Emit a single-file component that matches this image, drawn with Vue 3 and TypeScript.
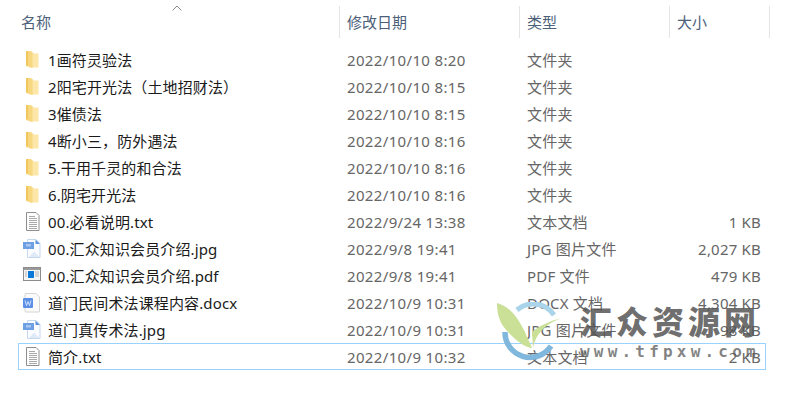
<script setup lang="ts">
// 文件列表 — 资源管理器详细信息视图
type Kind = 'folder' | 'txt' | 'jpg' | 'pdf' | 'docx'

interface Row {
  name: string
  date: string
  type: string
  size: string
  kind: Kind
  selected?: boolean
}

const columns = [
  { label: '名称', cls: 'col-name' },
  { label: '修改日期', cls: 'col-date' },
  { label: '类型', cls: 'col-type' },
  { label: '大小', cls: 'col-size' },
]

const rows: Row[] = [
  { name: '1画符灵验法', date: '2022/10/10 8:20', type: '文件夹', size: '', kind: 'folder' },
  { name: '2阳宅开光法（土地招财法）', date: '2022/10/10 8:15', type: '文件夹', size: '', kind: 'folder' },
  { name: '3催债法', date: '2022/10/10 8:15', type: '文件夹', size: '', kind: 'folder' },
  { name: '4断小三，防外遇法', date: '2022/10/10 8:16', type: '文件夹', size: '', kind: 'folder' },
  { name: '5.干用千灵的和合法', date: '2022/10/10 8:16', type: '文件夹', size: '', kind: 'folder' },
  { name: '6.阴宅开光法', date: '2022/10/10 8:16', type: '文件夹', size: '', kind: 'folder' },
  { name: '00.必看说明.txt', date: '2022/9/24 13:38', type: '文本文档', size: '1 KB', kind: 'txt' },
  { name: '00.汇众知识会员介绍.jpg', date: '2022/9/8 19:41', type: 'JPG 图片文件', size: '2,027 KB', kind: 'jpg' },
  { name: '00.汇众知识会员介绍.pdf', date: '2022/9/8 19:41', type: 'PDF 文件', size: '479 KB', kind: 'pdf' },
  { name: '道门民间术法课程内容.docx', date: '2022/10/9 10:31', type: 'DOCX 文档', size: '4,304 KB', kind: 'docx' },
  { name: '道门真传术法.jpg', date: '2022/10/9 10:31', type: 'JPG 图片文件', size: '98 KB', kind: 'jpg' },
  { name: '简介.txt', date: '2022/10/9 10:32', type: '文本文档', size: '2 KB', kind: 'txt', selected: true },
]
</script>

<template>
  <div class="explorer">
    <div class="sort-row">
      <svg class="sort-arrow" width="10" height="6" viewBox="0 0 10 6" fill="none" stroke="#8a8a8a" stroke-width="1">
        <polyline points="0.5 5.5 5 1 9.5 5.5" />
      </svg>
    </div>
    <div class="head">
      <div v-for="c in columns" :key="c.label" class="head-cell" :class="c.cls">{{ c.label }}</div>
    </div>
    <div class="list">
      <div v-for="r in rows" :key="r.name" class="row" :class="{ selected: r.selected }">
        <div class="cell-name">
          <svg class="icon" width="20" height="20" viewBox="0 0 20 20">
            <template v-if="r.kind === 'folder'">
              <path d="M3 1h5l3 2.500h4.500v14h-9z" fill="#fce7a8" />
              <path d="M3 1h4.500l2 1.500v15.500l-6.500-2z" fill="#f7d77f" />
              <path d="M3 1h2v14.500l-2-.5z" fill="#f1c65c" />
            </template>
            <template v-else-if="r.kind === 'txt'">
              <path d="M3.500 .5h9.500l3 3v15h-12.500z" fill="#fdfdfd" stroke="#8e8e8e" />
              <path d="M6 4.500h6M6 6.500h8M6 8.500h8M6 10.500h8M6 12.500h8M6 14.500h8M6 16.500h8" stroke="#a8a8a8" />
            </template>
            <template v-else-if="r.kind === 'jpg'">
              <path d="M4.500 .5h8.500l4 4v14h-12.500z" fill="#fafcff" stroke="#c4d8f0" />
              <path d="M12.500 .5l4.500 4.500h-4.500z" fill="#5f93dd" />
              <path d="M6 18l5-5.500 5.500 5.500z" fill="#dfeaf8" />
              <rect x="0" y="3" width="11" height="7" fill="#6c9fe4" />
              <rect x="3" y="5" width="5" height="2.500" fill="#a9c7ee" />
            </template>
            <template v-else-if="r.kind === 'pdf'">
              <rect x="0.500" y="1.500" width="17" height="13" fill="#f6f6f6" stroke="#8c8c8c" />
              <rect x="1" y="2" width="16" height="2" fill="#9a9a9a" />
              <rect x="5" y="5" width="6" height="7" fill="#0a78d7" />
              <path d="M12 6h4M12 8h4M12 10h4M2 6h2M2 8h2M2 10h2" stroke="#b4b4b4" />
            </template>
            <template v-else>
              <path d="M2.500 .5h10.500l3.500 3.500v14a1 1 0 0 1-1 1h-12.500a1 1 0 0 1-1-1v-16.500a1 1 0 0 1 1-1z" fill="#fafafa" stroke="#d4d4d4" />
              <rect x="0" y="5" width="10" height="10" rx="1" fill="#5b90e6" />
              <path d="M2 7.500l1.500 5 1.500-4 1.500 4 1.500-5" fill="none" stroke="#cfe0fa" />
            </template>
          </svg>
          <span class="name">{{ r.name }}</span>
        </div>
        <div class="cell-date">{{ r.date }}</div>
        <div class="cell-type">{{ r.type }}</div>
        <div class="cell-size">{{ r.size }}</div>
      </div>
    </div>

    <!-- 水印 -->
    <div class="watermark">
      <svg class="wm-logo" width="70" height="60" viewBox="0 0 70 60">
        <path d="M20 8 A 25 25 0 0 1 57 13" fill="none" stroke="#a9d4ea" stroke-width="5" />
        <path d="M8 30 A 25 25 0 0 0 54 44" fill="none" stroke="#80b8dd" stroke-width="5.500" />
        <path d="M0 1 C 10 4 18 10 28 30 C 30 36 33 40 35 46 C 25 45 13 33 6 24 C 1 16 0 8 0 1z" fill="#c9e096" />
        <path d="M36 46 C 38 38 42 24 65 16 C 52 19 42 24 35 30z" fill="#c9e096" />
      </svg>
      <div class="wm-text">
        <div class="wm-cn">汇众资源网</div>
        <div class="wm-url">www.tfpxw.com</div>
      </div>
    </div>
  </div>
</template>

<style scoped>
.explorer {
  position: relative;
  width: 805px;
  height: 403px;
  overflow: hidden;
  background: #ffffff;
  font-family: "Noto Sans", "Noto Sans CJK SC", sans-serif;
  font-size: 15px;
  color: #1f1f1f;
}

.sort-row {
  height: 6px;
  position: relative;
}

.sort-arrow {
  position: absolute;
  left: 172px;
  top: 5px;
}

/* 表头 */
.head {
  display: grid;
  grid-template-columns: 340px 180px 150px 100px;
  height: 32px;
}

.head-cell {
  display: flex;
  align-items: center;
  padding-left: 7px;
  padding-bottom: 2px;
  color: #4c607a;
  border-right: 1px solid #e5e5e5;
}

.head-cell.col-name {
  padding-left: 21px;
}

/* 列表 */
.list {
  padding: 8px 39px 0 18px;
}

.row {
  display: grid;
  grid-template-columns: 321px 180px 150px 96px;
  height: 27px;
  align-items: center;
  border: 1px solid transparent;
  box-sizing: border-box;
}

.row.selected {
  border-color: #99d1ff;
}

.cell-name {
  display: flex;
  align-items: center;
  padding-left: 4px;
  min-width: 0;
  white-space: nowrap;
}

.icon {
  flex-shrink: 0;
  margin-right: 5px;
}

.name {
  color: #1a1a1a;
  letter-spacing: 0.12px;
}

.cell-date,
.cell-type {
  padding-left: 7px;
  color: #666666;
  white-space: nowrap;
}

.cell-date {
  letter-spacing: 0.35px;
}

.cell-type {
  letter-spacing: 0.2px;
}

.cell-size {
  text-align: right;
  padding-right: 5px;
  color: #666666;
  white-space: nowrap;
  letter-spacing: 0.2px;
}

/* 水印 */
.watermark {
  position: absolute;
  left: 497px;
  top: 302px;
  display: flex;
  align-items: flex-start;
  pointer-events: none;
}

.wm-logo {
  flex-shrink: 0;
  margin-right: 13px;
}

.wm-cn {
  font-family: "Noto Sans CJK SC", sans-serif;
  font-weight: 900;
  font-size: 32px;
  line-height: 36px;
  letter-spacing: 4px;
  color: rgba(85, 85, 85, 0.85);
  white-space: nowrap;
}

.wm-url {
  margin-top: 4px;
  font-family: "DejaVu Sans Mono", monospace;
  font-weight: 700;
  font-size: 16px;
  line-height: 20px;
  letter-spacing: 4.2px;
  color: rgba(90, 90, 90, 0.75);
  white-space: nowrap;
}
</style>
